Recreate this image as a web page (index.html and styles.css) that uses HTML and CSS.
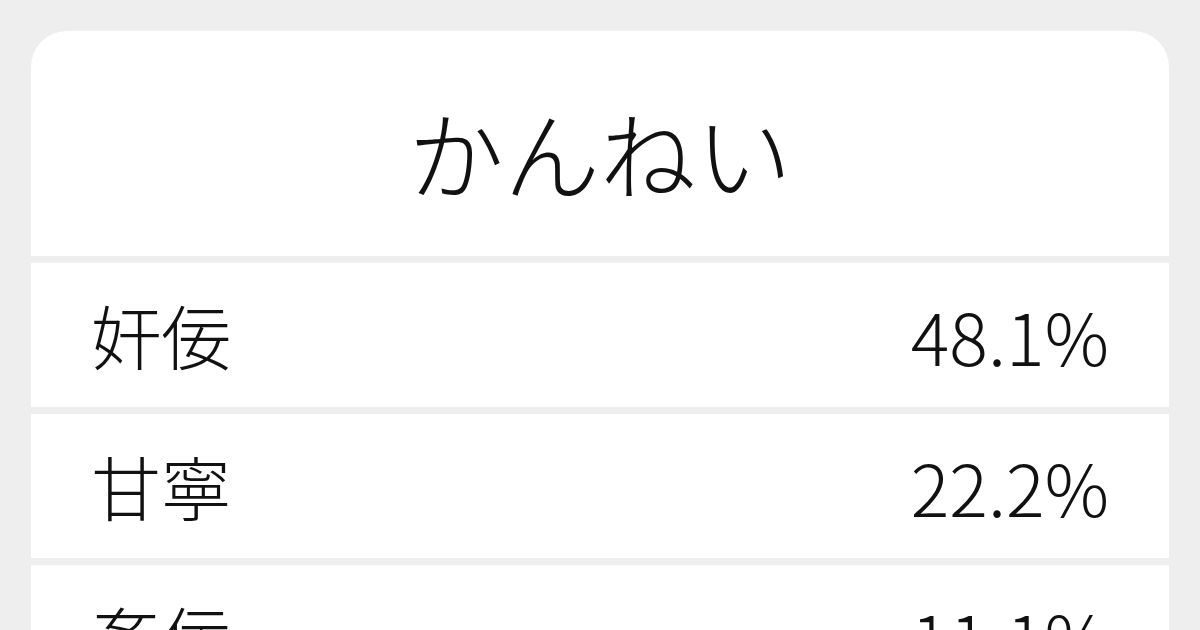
FILE: index.html
```html
<!DOCTYPE html>
<html lang="ja">
<head>
    <meta charset="UTF-8">
    <meta name="viewport" content="width=device-width, initial-scale=1.0">
    <title>かんねい</title>
    <link rel="stylesheet" href="styles.css">
</head>
<body>
    <div class="card">
        <div class="yomi">かんねい</div>
        <div class="row">
            <span class="kanji">奸佞</span>
            <span class="ratio">48.1%</span>
        </div>
        <div class="row">
            <span class="kanji">甘寧</span>
            <span class="ratio">22.2%</span>
        </div>
        <div class="row">
            <span class="kanji">姦佞</span>
            <span class="ratio">11.1%</span>
        </div>
    </div>
</body>
</html>
```

FILE: styles.css
```css
:root {
    --background-color: #eeeeee;
    --surface-color: #ffffff;
    --text-color: #111111;
}
html, body {
    margin: 0;
    height: 100%;
    overflow: hidden;
}
body {
    font-family: "Noto Sans CJK JP", "Noto Sans", sans-serif;
    font-weight: 300;
    background-color: var(--background-color);
    color: var(--text-color);
    padding: 31px 31px 0;
    box-sizing: border-box;
}
.card {
    display: flex;
    flex-direction: column;
    gap: 7px;
}
.yomi {
    background-color: var(--surface-color);
    border-radius: 36px 36px 0 0;
    height: 225px;
    display: flex;
    align-items: center;
    justify-content: center;
    padding-top: 14px;
    box-sizing: border-box;
    font-size: 96px;
    line-height: 1;
}
.row {
    background-color: var(--surface-color);
    height: 144px;
    display: flex;
    align-items: center;
    justify-content: space-between;
    padding: 0 60px;
    font-size: 72px;
    line-height: 1;
}
.kanji {
    font-size: 70px;
}
```
